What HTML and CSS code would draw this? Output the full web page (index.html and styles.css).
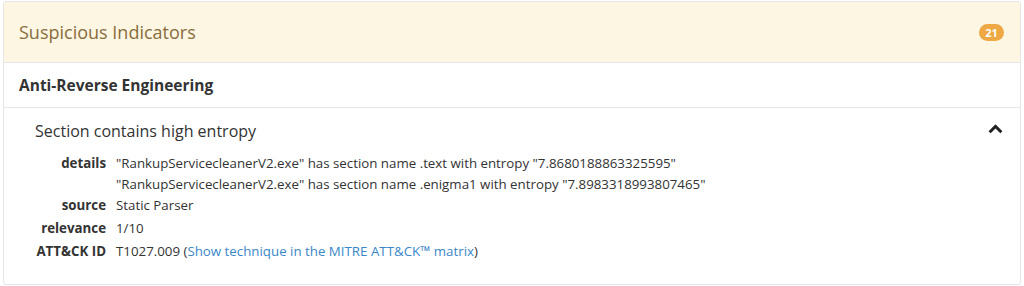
FILE: index.html
```html
<!DOCTYPE html>
<html lang="en">
  <head>
    <meta charset="UTF-8" />
    <meta name="viewport" content="width=device-width, initial-scale=1.0" />
    <title>Suspicious Indicators</title>
    <link rel="stylesheet" href="styles.css">
  </head>
  <body>
    <div class="panel">
      <div class="panel-heading">
        <span class="panel-title">Suspicious Indicators</span>
        <span class="badge">21</span>
      </div>

      <div class="category">Anti-Reverse Engineering</div>

      <div class="indicator">
        <div class="indicator-head">
          <span class="indicator-title">Section contains high entropy</span>
          <svg class="chevron" xmlns="http://www.w3.org/2000/svg" viewBox="0 0 14 10">
            <path d="M0.5 7.5L7 1l6.5 6.5-2 2L7 5 2.5 9.5z"/>
          </svg>
        </div>

        <dl class="facts">
          <dt>details</dt>
          <dd>
            "RankupServicecleanerV2.exe" has section name .text with entropy "7.8680188863325595"<br />
            "RankupServicecleanerV2.exe" has section name .enigma1 with entropy "7.8983318993807465"
          </dd>
          <dt>source</dt>
          <dd>Static Parser</dd>
          <dt>relevance</dt>
          <dd>1/10</dd>
          <dt>ATT&amp;CK ID</dt>
          <dd>T1027.009 (<a href="#">Show technique in the MITRE ATT&amp;CK™ matrix</a>)</dd>
        </dl>
      </div>
    </div>
  </body>
</html>
```

FILE: styles.css
```css
:root {
  --border-color: #e6e6e6;
  --warning-bg: #fcf6e3;
  --warning-text: #8a6d3b;
  --badge-color: #eea945;
  --text-color: #333333;
  --link-color: #3a87c8;
}

* {
  margin: 0;
  padding: 0;
  box-sizing: border-box;
}

body {
  font-family: "Open Sans", "Noto Sans", sans-serif;
  color: var(--text-color);
  background-color: white;
  padding: 1px 3px 0 3px;
}

.panel {
  border: 1px solid var(--border-color);
  border-radius: 3px;
  overflow: hidden;
}

.panel-heading {
  display: flex;
  align-items: center;
  justify-content: space-between;
  height: 61px;
  padding: 0 16px 0 15px;
  background-color: var(--warning-bg);
  border-bottom: 1px solid var(--border-color);
}

.panel-title {
  font-size: 18px;
  color: var(--warning-text);
}

.badge {
  display: inline-block;
  min-width: 25px;
  padding: 0 6px;
  height: 17px;
  line-height: 17px;
  border-radius: 9px;
  background-color: var(--badge-color);
  color: white;
  font-size: 11px;
  font-weight: 700;
  text-align: center;
}

.category {
  height: 45px;
  padding: 0 15px;
  display: flex;
  align-items: center;
  font-size: 15.5px;
  font-weight: 700;
  border-bottom: 1px solid var(--border-color);
}

.indicator {
  padding: 11px 17px 22px 31px;
}

.indicator-head {
  display: flex;
  align-items: center;
  justify-content: space-between;
  height: 24px;
}

.indicator-title {
  font-size: 16px;
}

.chevron {
  width: 15px;
  height: 11px;
  fill: #222222;
  margin-top: -5px;
}

.facts {
  display: grid;
  grid-template-columns: 71px 1fr;
  column-gap: 10px;
  row-gap: 2px;
  margin-top: 10px;
  font-size: 13.3px;
  line-height: 21px;
}

.facts dt {
  font-weight: 700;
  text-align: right;
}

.facts dd:first-of-type {
  margin-bottom: -2px;
}

.facts a {
  color: var(--link-color);
  text-decoration: none;
}
```
